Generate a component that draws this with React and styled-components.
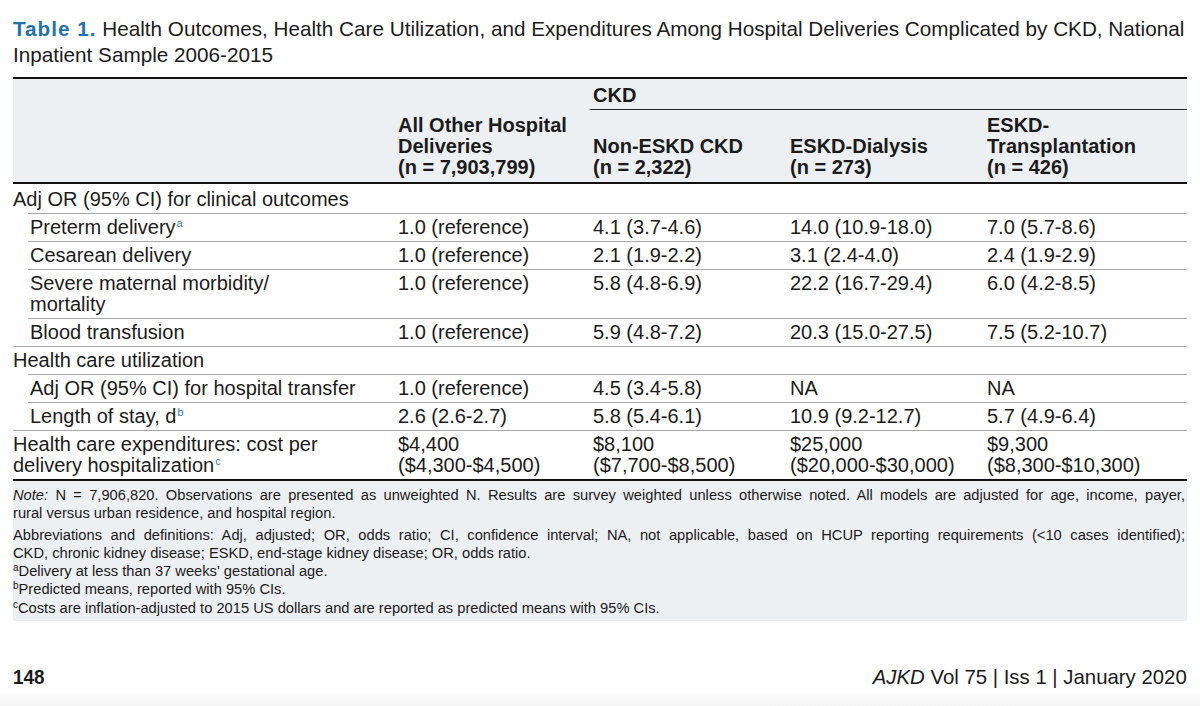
import React from 'react'
import styled, { createGlobalStyle } from 'styled-components'

const GlobalStyle = createGlobalStyle`
  html, body {
    margin: 0;
    padding: 0;
    background: #ffffff;
  }
  body {
    font-family: "Liberation Sans", Arial, sans-serif;
    color: #1b1b1b;
  }
`

const COLS = '385px 195px 197px 197px 200px'
const SUB_COLS = '370px 195px 197px 197px 200px'

const rows = [
  { label: 'Adj OR (95% CI) for clinical outcomes', group: true },
  { label: 'Preterm delivery', sup: 'a', sub: true, cells: ['1.0 (reference)', '4.1 (3.7-4.6)', '14.0 (10.9-18.0)', '7.0 (5.7-8.6)'] },
  { label: 'Cesarean delivery', sub: true, cells: ['1.0 (reference)', '2.1 (1.9-2.2)', '3.1 (2.4-4.0)', '2.4 (1.9-2.9)'] },
  { label: ['Severe maternal morbidity/', 'mortality'], sub: true, cells: ['1.0 (reference)', '5.8 (4.8-6.9)', '22.2 (16.7-29.4)', '6.0 (4.2-8.5)'] },
  { label: 'Blood transfusion', sub: true, cells: ['1.0 (reference)', '5.9 (4.8-7.2)', '20.3 (15.0-27.5)', '7.5 (5.2-10.7)'] },
  { label: 'Health care utilization', group: true, ruled: true },
  { label: 'Adj OR (95% CI) for hospital transfer', sub: true, cells: ['1.0 (reference)', '4.5 (3.4-5.8)', 'NA', 'NA'] },
  { label: 'Length of stay, d', sup: 'b', sub: true, cells: ['2.6 (2.6-2.7)', '5.8 (5.4-6.1)', '10.9 (9.2-12.7)', '5.7 (4.9-6.4)'] },
  {
    label: ['Health care expenditures: cost per', 'delivery hospitalization'],
    sup: 'c',
    ruled: true,
    cells: [
      ['$4,400', '($4,300-$4,500)'],
      ['$8,100', '($7,700-$8,500)'],
      ['$25,000', '($20,000-$30,000)'],
      ['$9,300', '($8,300-$10,300)'],
    ],
  },
]

const Lines = ({ value, sup }) => {
  const list = Array.isArray(value) ? value : [value]
  return list.map((line, i) => (
    <Line key={i}>
      {line}
      {sup && i === list.length - 1 ? <Sup>{sup}</Sup> : null}
    </Line>
  ))
}

const App = () => {
  return (
    <React.Fragment>
      <GlobalStyle />
      <Page>
        <Title>
          <TitleLine>
            <TableNo>Table 1.</TableNo> Health Outcomes, Health Care Utilization, and Expenditures Among Hospital Deliveries Complicated by CKD, National
          </TitleLine>
          <TitleLine>Inpatient Sample 2006-2015</TitleLine>
        </Title>

        <Table>
          <Head>
            <HeadRow>
              <span />
              <span />
              <GroupCell>CKD</GroupCell>
            </HeadRow>
            <LabelRow>
              <span />
              <HeadCell>
                <Line>All Other Hospital</Line>
                <Line>Deliveries</Line>
                <Line>(n = 7,903,799)</Line>
              </HeadCell>
              <HeadCell>
                <Line>Non-ESKD CKD</Line>
                <Line>(n = 2,322)</Line>
              </HeadCell>
              <HeadCell>
                <Line>ESKD-Dialysis</Line>
                <Line>(n = 273)</Line>
              </HeadCell>
              <HeadCell>
                <Line>ESKD-</Line>
                <Line>Transplantation</Line>
                <Line>(n = 426)</Line>
              </HeadCell>
            </LabelRow>
          </Head>

          <Body>
            {rows.map((row, i) => (
              <Row key={i} $sub={row.sub} $ruled={row.sub || row.ruled}>
                <Label $sub={row.sub}>
                  <Lines value={row.label} sup={row.sup} />
                </Label>
                {(row.cells || []).map((cell, j) => (
                  <Cell key={j}>
                    <Lines value={cell} />
                  </Cell>
                ))}
              </Row>
            ))}
          </Body>

          <Notes>
            <Note $gap>
              <NoteLine $justify>
                <em>Note:</em> N = 7,906,820. Observations are presented as unweighted N. Results are survey weighted unless otherwise noted. All models are adjusted for age, income, payer,
              </NoteLine>
              <NoteLine>rural versus urban residence, and hospital region.</NoteLine>
            </Note>
            <Note>
              <NoteLine $justify>
                Abbreviations and definitions: Adj, adjusted; OR, odds ratio; CI, confidence interval; NA, not applicable, based on HCUP reporting requirements (&lt;10 cases identified);
              </NoteLine>
              <NoteLine>CKD, chronic kidney disease; ESKD, end-stage kidney disease; OR, odds ratio.</NoteLine>
            </Note>
            <NoteLine>
              <FootMark>a</FootMark>Delivery at less than 37 weeks' gestational age.
            </NoteLine>
            <NoteLine>
              <FootMark>b</FootMark>Predicted means, reported with 95% CIs.
            </NoteLine>
            <NoteLine>
              <FootMark>c</FootMark>Costs are inflation-adjusted to 2015 US dollars and are reported as predicted means with 95% CIs.
            </NoteLine>
          </Notes>
        </Table>

        <Footer>
          <PageNo>148</PageNo>
          <Journal>
            <em>AJKD</em> Vol 75 | Iss 1 | January 2020
          </Journal>
        </Footer>
      </Page>
    </React.Fragment>
  )
}

const Page = styled.div`
  width: 1200px;
  height: 706px;
  box-sizing: border-box;
  padding: 16px 13px 0 13px;
  background: linear-gradient(to bottom, #ffffff 0, #ffffff 690px, #f4f4f4 706px);
  display: flex;
  flex-direction: column;
`

const Title = styled.div`
  font-size: 20.7px;
  line-height: 26px;
  color: #1b1b1b;
  margin-bottom: 9px;
`

const TitleLine = styled.div`
  white-space: nowrap;
`

const TableNo = styled.b`
  color: #1f73ae;
  letter-spacing: 1px;
`

const Table = styled.div`
  width: 1174px;
  border-top: 2px solid #111;
`

const Head = styled.div`
  background: #edf0f3;
  border-bottom: 2px solid #111;
`

const HeadRow = styled.div`
  display: grid;
  grid-template-columns: 385px 195px 594px;
  font-size: 20px;
  font-weight: bold;
  line-height: 21px;
`

const GroupCell = styled.div`
  padding: 6px 0 3px 3px;
  margin-left: -3px;
  border-bottom: 1.5px solid #222;
`

const LabelRow = styled.div`
  display: grid;
  grid-template-columns: ${COLS};
  align-items: end;
  padding: 5px 0 4px;
`

const HeadCell = styled.div`
  font-size: 20px;
  font-weight: bold;
  line-height: 21px;
`

const Line = styled.div`
  white-space: nowrap;
`

const Body = styled.div`
  padding-top: 1px;
  border-bottom: 2px solid #111;
`

const Row = styled.div`
  display: grid;
  grid-template-columns: ${props => (props.$sub ? SUB_COLS : COLS)};
  margin-left: ${props => (props.$sub ? '15px' : '0')};
  border-top: ${props => (props.$ruled ? '1px solid #a7a7a7' : '1px solid transparent')};
  padding: 3px 0;
  font-size: 20px;
  line-height: 21px;
`

const Label = styled.div`
  padding-left: ${props => (props.$sub ? '2px' : '0')};
`

const Cell = styled.div``

const Sup = styled.sup`
  font-size: 11px;
  line-height: 0;
  color: #2a7db8;
  vertical-align: 7px;
  margin-left: 1px;
`

const Notes = styled.div`
  background: #edf0f3;
  padding: 5px 2px 4px 0;
  font-size: 14.7px;
  line-height: 18.3px;
  color: #1b1b1b;
`

const Note = styled.div`
  margin-bottom: ${props => (props.$gap ? '3px' : '0')};
`

const NoteLine = styled.div`
  white-space: ${props => (props.$justify ? 'normal' : 'nowrap')};
  text-align: ${props => (props.$justify ? 'justify' : 'left')};
  text-align-last: ${props => (props.$justify ? 'justify' : 'left')};
`

const FootMark = styled.sup`
  font-size: 10px;
  line-height: 0;
  vertical-align: 5px;
`

const Footer = styled.div`
  margin-top: auto;
  margin-bottom: 17px;
  display: flex;
  justify-content: space-between;
  align-items: baseline;
  font-size: 21px;
  color: #1b1b1b;
`

const PageNo = styled.b`
  display: inline-block;
  transform: scaleX(0.9);
  transform-origin: left center;
`

const Journal = styled.span`
  display: inline-block;
  transform: scaleX(0.97);
  transform-origin: right center;
`

export default App
